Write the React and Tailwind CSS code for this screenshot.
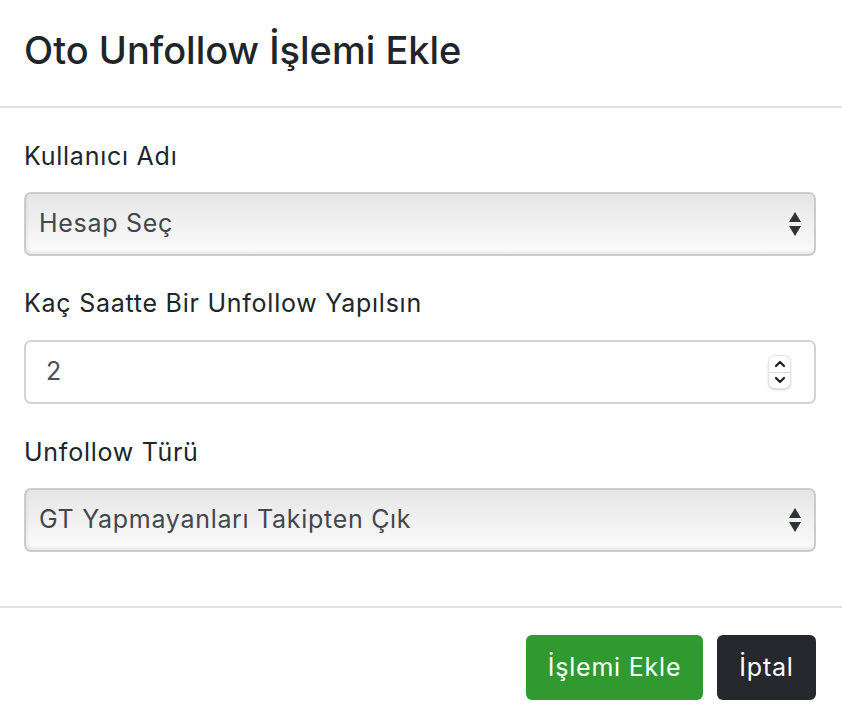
import React from "react";

function SelectArrows() {
  return (
    <svg width="14" height="26" viewBox="0 0 14 26" className="shrink-0">
      <path d="M7 1 L13 11 L1 11 Z" fill="#2f3236" />
      <path d="M1 15 L13 15 L7 25 Z" fill="#2f3236" />
    </svg>
  );
}

function Spinner() {
  return (
    <div className="flex flex-col w-[23px] h-[34px] rounded-[7px] bg-white border border-[#e3e3e3] shadow-[0_1px_2px_rgba(0,0,0,0.18)] overflow-hidden">
      <div className="flex-1 flex items-center justify-center border-b border-[#dcdcdc]">
        <svg width="12" height="8" viewBox="0 0 12 8">
          <path d="M2 6 L6 2 L10 6" stroke="#1e1e1e" strokeWidth="2.2" fill="none" strokeLinecap="round" strokeLinejoin="round" />
        </svg>
      </div>
      <div className="flex-1 flex items-center justify-center">
        <svg width="12" height="8" viewBox="0 0 12 8">
          <path d="M2 2 L6 6 L10 2" stroke="#1e1e1e" strokeWidth="2.2" fill="none" strokeLinecap="round" strokeLinejoin="round" />
        </svg>
      </div>
    </div>
  );
}

function FakeSelect({ value }) {
  return (
    <div className="h-[64px] flex items-center justify-between pl-[13px] pr-[12px] rounded-[7px] border-2 border-[#c8ccd3] bg-gradient-to-b from-[#e6e6e6] to-[#fbfbfb] shadow-[inset_1px_-2px_3px_rgba(0,0,0,0.08)]">
      <span className="text-[25px] tracking-[0.7px] text-[#42474d]">{value}</span>
      <SelectArrows />
    </div>
  );
}

export default function App() {
  return (
    <div className="w-[842px] h-[726px] bg-white text-[#212529] font-[Inter] overflow-hidden">
      <div className="h-[108px] flex items-center pl-[24px] border-b-2 border-[#dee2e6]">
        <h4 className="text-[38px] font-medium leading-none pb-[6px]">
          Oto Unfollow İşlemi Ekle
        </h4>
      </div>

      <div className="pl-[24px] pr-[26px] pt-[30px] pb-[54px] flex flex-col">
        <label className="text-[25px] tracking-[0.75px] leading-[36px] mb-[18px]">Kullanıcı Adı</label>
        <FakeSelect value="Hesap Seç" />

        <label className="text-[25px] tracking-[0.75px] leading-[36px] mt-[29px] mb-[19px]">
          Kaç Saatte Bir Unfollow Yapılsın
        </label>
        <div className="h-[64px] flex items-center justify-between pl-[20px] pr-[23px] rounded-[7px] border-2 border-[#ced4da] bg-white">
          <span className="text-[25px] text-[#495057]">2</span>
          <Spinner />
        </div>

        <label className="text-[25px] tracking-[0.75px] leading-[36px] mt-[30px] mb-[18px]">Unfollow Türü</label>
        <FakeSelect value="GT Yapmayanları Takipten Çık" />
      </div>

      <div className="border-t-2 border-[#dee2e6] flex justify-end gap-[14px] pr-[26px] pt-[27px]">
        <button className="h-[65px] w-[177px] rounded-[6px] bg-[#309a31] text-white text-[25px] tracking-[0.8px]">
          İşlemi Ekle
        </button>
        <button className="h-[65px] w-[99px] rounded-[6px] bg-[#25292e] text-white text-[25px] tracking-[0.8px]">
          İptal
        </button>
      </div>
    </div>
  );
}
